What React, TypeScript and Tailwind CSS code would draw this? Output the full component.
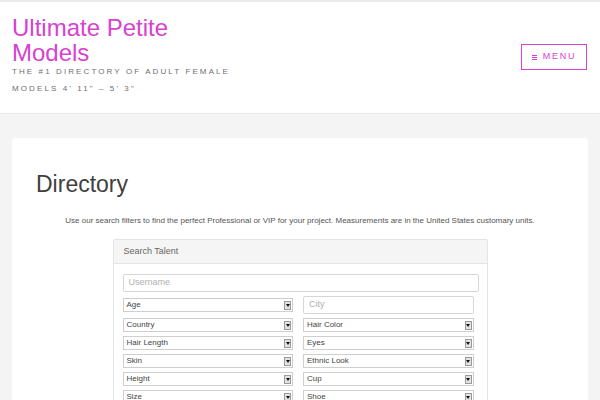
import React from "react";

const font = { fontFamily: '"Liberation Sans", Arial, Helvetica, sans-serif' };

const leftSelects = ["Country", "Hair Length", "Skin", "Height", "Size"];
const rightSelects = ["Hair Color", "Eyes", "Ethnic Look", "Cup", "Shoe"];

function FakeSelect({ label }: { label: string }) {
    return (
        <div className="flex h-[14px] w-full items-center justify-between border border-[#cfcfcf] bg-white pl-[3px] pr-[1px]">
            <span className="text-[8px] leading-none text-[#444]">{label}</span>
            <span className="flex h-[9px] w-[7px] items-center justify-center border border-[#9a9a9a] bg-[#e2e2e2]">
                <span className="h-0 w-0 border-x-[2px] border-t-[3px] border-x-transparent border-t-[#111]"></span>
            </span>
        </div>
    );
}

export default function App() {
    return (
        <div className="min-h-[400px] w-[600px] overflow-hidden bg-[#f4f4f4]" style={font}>
            {/* header */}
            <header className="flex h-[114px] items-start justify-between border-t-2 border-b border-[#e9e9e9] bg-white px-3">
                <div className="pt-[14px]">
                    <h1 className="text-[24px] leading-[24.5px] text-[#d841d0]">
                        <span className="block">Ultimate Petite</span>
                        <span className="block">Models</span>
                    </h1>
                    <p className="-mt-[2px] text-[8px] uppercase leading-[17px] tracking-[2.1px] text-[#6f6f6f]">
                        <span className="block">The #1 Directory of Adult Female</span>
                        <span className="block">Models 4' 11" – 5' 3"</span>
                    </p>
                </div>
                <button className="mt-[42px] mr-[1px] flex h-[26px] w-[66px] items-center justify-center gap-[6px] border border-[#d841d0] text-[9px] tracking-[1.8px] text-[#d841d0]">
                    <span className="flex flex-col gap-[1px]">
                        <span className="h-[1px] w-[5px] bg-[#d841d0]"></span>
                        <span className="h-[1px] w-[5px] bg-[#d841d0]"></span>
                        <span className="h-[1px] w-[5px] bg-[#d841d0]"></span>
                    </span>
                    MENU
                </button>
            </header>

            {/* content */}
            <main className="px-3 pt-6">
                <div className="rounded-[4px] bg-white pb-10">
                    <h2 className="pl-6 pt-[31px] text-[23px] leading-[30px] text-[#3f3f3f]">Directory</h2>
                    <p className="mt-[16px] text-center text-[8px] leading-[12px] text-[#555]">
                        Use our search filters to find the perfect Professional or VIP for your project. Measurements are in the United States customary units.
                    </p>

                    <div className="mx-auto mt-[12px] w-[375px] rounded-t-[2px] border border-[#e4e4e4]">
                        <div className="flex h-[24px] items-center border-b border-[#e4e4e4] bg-[#f5f5f5] px-[10px] text-[9px] text-[#666]">
                            Search Talent
                        </div>
                        <div className="px-[9px] pt-[10px] pb-3">
                            <div className="flex h-[18px] w-[356px] items-center rounded-[2px] border border-[#d6d6d6] px-[5px] text-[9px] text-[#b0b0b0]">
                                Username
                            </div>
                            <div className="mt-[4px] grid w-[351px] grid-cols-2 gap-x-[10px]">
                                <div className="flex flex-col">
                                    <div className="flex h-[18px] items-center">
                                        <FakeSelect label="Age" />
                                    </div>
                                    {leftSelects.map((s) => (
                                        <div key={s} className="mt-[4px]">
                                            <FakeSelect label={s} />
                                        </div>
                                    ))}
                                </div>
                                <div className="flex flex-col">
                                    <div className="flex h-[18px] items-center rounded-[2px] border border-[#d6d6d6] px-[5px] text-[9px] text-[#b0b0b0]">
                                        City
                                    </div>
                                    {rightSelects.map((s) => (
                                        <div key={s} className="mt-[4px]">
                                            <FakeSelect label={s} />
                                        </div>
                                    ))}
                                </div>
                            </div>
                        </div>
                    </div>
                </div>
            </main>
        </div>
    );
}
